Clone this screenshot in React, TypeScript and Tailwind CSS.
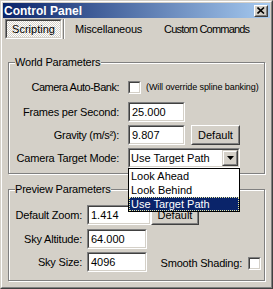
import React from 'react';

function Edit({ className, value }: { className: string; value: string }) {
  return (
    <div className={"h-[20px] border border-t-[#808080] border-l-[#808080] border-r-white border-b-white " + className}>
      <div className="h-full border border-t-[#404040] border-l-[#404040] border-r-[#d4d0c8] border-b-[#d4d0c8] bg-white flex items-center pl-[2px] text-[11px] text-black leading-none">
        {value}
      </div>
    </div>
  );
}

function Btn({ className, label }: { className: string; label: string }) {
  return (
    <div className={"h-[20px] border border-t-white border-l-white border-r-[#404040] border-b-[#404040] " + className}>
      <div className="h-full border border-t-[#d4d0c8] border-l-[#d4d0c8] border-r-[#808080] border-b-[#808080] flex items-center justify-center text-[11px] leading-none text-black">
        {label}
      </div>
    </div>
  );
}

function Check() {
  return (
    <div className="w-[13px] h-[13px] shrink-0 border border-t-[#808080] border-l-[#808080] border-r-white border-b-white">
      <div className="h-full border border-t-[#404040] border-l-[#404040] border-r-[#d4d0c8] border-b-[#d4d0c8] bg-white" />
    </div>
  );
}

function Group({ title, className, children }: { title: string; className: string; children: React.ReactNode }) {
  return (
    <div className={"relative border border-[#808080] shadow-[inset_1px_1px_0_#fff,1px_1px_0_#fff] " + className}>
      <span className="absolute left-[6px] top-[-7px] bg-[#d4d0c8] pr-[1px] text-[11px] leading-[13px] text-black tracking-[-0.2px]">{title}</span>
      {children}
    </div>
  );
}

export default function App() {
  return (
    <div className="w-[273px] h-[289px] bg-[#d4d0c8] border border-t-[#d4d0c8] border-l-[#d4d0c8] border-r-[#404040] border-b-[#404040] font-['Liberation_Sans',Arial,sans-serif] text-black">
      <div className="h-full border border-t-white border-l-white border-r-[#808080] border-b-[#808080] p-px flex flex-col">
        {/* Title bar */}
        <div className="h-[15px] shrink-0 flex items-center justify-between bg-[linear-gradient(90deg,#0a246a,#a6caf0)]">
          <span className="pl-[1px] text-[12px] font-bold text-white leading-none">Control Panel</span>
          <div className="mr-[2px] w-[14px] h-[12px] border border-t-white border-l-white border-r-[#404040] border-b-[#404040] bg-[#d4d0c8]">
            <div className="h-full border border-t-[#d4d0c8] border-l-[#d4d0c8] border-r-[#808080] border-b-[#808080] flex items-center justify-center">
              <svg width="8" height="7" viewBox="0 0 8 7">
                <path d="M0.5 0.5 L7 6.5 M7 0.5 L0.5 6.5" stroke="#000" strokeWidth="1.6" />
              </svg>
            </div>
          </div>
        </div>

        {/* Tabs */}
        <div className="mt-[1px] h-[20px] shrink-0 flex items-center text-[11px] leading-none">
          <div className="ml-[2px] w-[57px] h-[20px] border border-t-[#808080] border-l-[#808080] border-r-white border-b-white">
            <div className="h-full border border-t-[#404040] border-l-[#404040] border-r-[#d4d0c8] border-b-[#d4d0c8] bg-[repeating-conic-gradient(#ffffff_0_25%,#d4d0c8_0_50%)] bg-[length:2px_2px] flex items-center justify-center">
              Scripting
            </div>
          </div>
          <div className="ml-[1px] w-[2px] h-[20px] border-l border-l-[#808080] border-r border-r-white" />
          <span className="ml-[10px] tracking-[-0.2px]">Miscellaneous</span>
          <span className="ml-[22px] tracking-[-0.8px]">Custom Commands</span>
        </div>

        {/* World Parameters */}
        <Group title="World Parameters" className="ml-[5px] mt-[23px] w-[257px] h-[112px] shrink-0">
          <div className="mt-[18px] h-[13px] flex items-center text-[11px] leading-none">
            <span className="w-[110px] text-right tracking-[-0.5px]">Camera Auto-Bank:</span>
            <div className="ml-[9px]"><Check /></div>
            <span className="ml-[5px] text-[9px] tracking-[-0.1px]">(Will override spline banking)</span>
          </div>
          <div className="mt-[8px] h-[20px] flex items-center text-[11px] leading-none">
            <span className="w-[110px] text-right tracking-[-0.2px]">Frames per Second:</span>
            <Edit className="ml-[9px] w-[57px]" value="25.000" />
          </div>
          <div className="mt-[3px] h-[20px] flex items-center text-[11px] leading-none">
            <span className="w-[110px] text-right tracking-[-0.3px]">Gravity (m/s²):</span>
            <Edit className="ml-[9px] w-[57px]" value="9.807" />
            <Btn className="ml-[6px] w-[49px]" label="Default" />
          </div>
          <div className="mt-[3px] h-[20px] flex items-center text-[11px] leading-none">
            <span className="w-[110px] text-right tracking-[-0.2px]">Camera Target Mode:</span>
            <div className="relative ml-[9px] w-[112px] h-[20px] z-10">
              <div className="h-full border border-t-[#808080] border-l-[#808080] border-r-white border-b-white">
                <div className="h-full border border-t-[#404040] border-l-[#404040] border-r-[#d4d0c8] border-b-[#d4d0c8] bg-white flex items-center">
                  <span className="flex-1 pl-[1px]">Use Target Path</span>
                  <div className="w-[16px] h-full border border-t-[#d4d0c8] border-l-[#d4d0c8] border-r-[#404040] border-b-[#404040] bg-[#d4d0c8]">
                    <div className="h-full border border-t-white border-l-white border-r-[#808080] border-b-[#808080] flex items-center justify-center">
                      <svg width="7" height="4" viewBox="0 0 7 4"><path d="M0 0 H7 L3.5 4 Z" fill="#000" /></svg>
                    </div>
                  </div>
                </div>
              </div>
              <div className="absolute left-0 top-full w-[112px] border border-black bg-white text-[11px] leading-none">
                <div className="h-[14px] flex items-center pl-[2px]">Look Ahead</div>
                <div className="h-[14px] flex items-center pl-[2px]">Look Behind</div>
                <div className="h-[14px] flex items-center pl-[1px] bg-[#0a246a] text-white border border-dotted border-[#e8e8a0]">Use Target Path</div>
              </div>
            </div>
          </div>
        </Group>

        {/* Preview Parameters */}
        <Group title="Preview Parameters" className="ml-[5px] mt-[15px] w-[257px] h-[92px] shrink-0">
          <div className="mt-[15px] h-[20px] flex items-center text-[11px] leading-none">
            <span className="w-[73px] text-right tracking-[-0.2px]">Default Zoom:</span>
            <Edit className="ml-[5px] w-[64px]" value="1.414" />
            <Btn className="w-[48px]" label="Default" />
          </div>
          <div className="mt-[4px] h-[20px] flex items-center text-[11px] leading-none">
            <span className="w-[73px] text-right tracking-[-0.2px]">Sky Altitude:</span>
            <Edit className="ml-[5px] w-[60px]" value="64.000" />
          </div>
          <div className="mt-[3px] h-[20px] flex items-center text-[11px] leading-none">
            <span className="w-[73px] text-right tracking-[-0.2px]">Sky Size:</span>
            <Edit className="ml-[5px] w-[60px]" value="4096" />
            <div className="flex-1 flex items-center justify-end pr-[3px] pt-[3px]">
              <span className="tracking-[-0.2px]">Smooth Shading:</span>
              <div className="ml-[6px]"><Check /></div>
            </div>
          </div>
        </Group>
      </div>
    </div>
  );
}
